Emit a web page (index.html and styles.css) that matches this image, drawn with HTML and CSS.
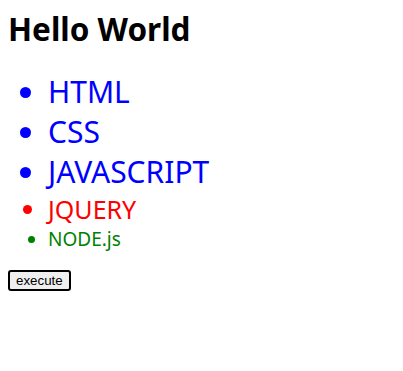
FILE: index.html
```html
<!DOCTYPE html>
<html lang="en">
<head>
    <meta charset="UTF-8">
    <title>Hello World</title>
    <link rel="stylesheet" href="styles.css">
</head>
<body>
    <h1>Hello World</h1>
    <ul class="tech-list">
        <li class="big">HTML</li>
        <li class="big">CSS</li>
        <li class="big">JAVASCRIPT</li>
        <li class="medium">JQUERY</li>
        <li class="small">NODE.js</li>
    </ul>
    <button class="run-button">execute</button>
</body>
</html>
```

FILE: styles.css
```css
body {
    font-family: "Noto Sans", sans-serif;
    margin: 8px;
}
h1 {
    font-size: 31.5px;
    line-height: 41px;
    margin: 0 0 23px;
}
.tech-list {
    margin: 0 0 16px;
    padding-left: 40px;
}
.big {
    font-size: 30px;
    line-height: 40px;
    color: blue;
}
.medium {
    font-size: 25px;
    line-height: 34px;
    color: red;
}
.small {
    font-size: 19px;
    line-height: 26px;
    color: green;
}
.run-button {
    font-family: "Liberation Sans", Arial, sans-serif;
    font-size: 13.33px;
    border: 2px solid #000;
    border-radius: 3px;
    background: #efefef;
    padding: 1px 6px;
}
```
